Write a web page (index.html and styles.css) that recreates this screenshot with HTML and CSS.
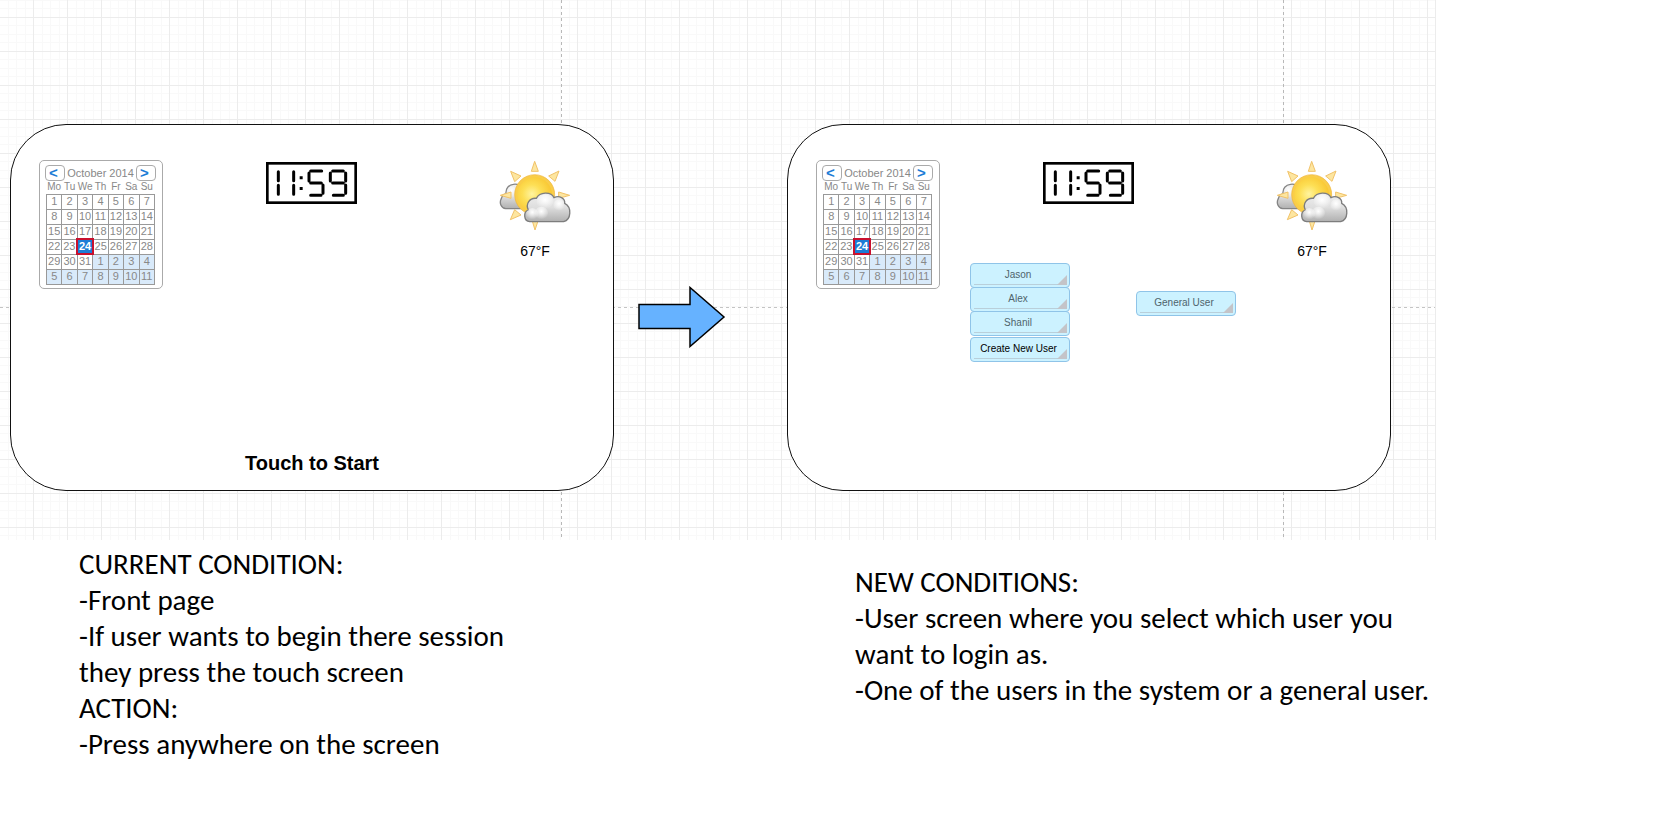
FILE: index.html
```
<!DOCTYPE html>
<html lang="en">
<head>
<meta charset="utf-8">
<title>Storyboard: front page to user screen</title>
<link rel="stylesheet" href="styles.css">
</head>
<body>
<svg class="defs" aria-hidden="true">
  <defs>
    <radialGradient id="sun" cx="42%" cy="48%" r="60%"><stop offset="0" stop-color="#fff4a0"/><stop offset=".45" stop-color="#fddf55"/><stop offset="1" stop-color="#f9c52f"/></radialGradient>
    <linearGradient id="cloud" x1="0" y1="0" x2="0" y2="1"><stop offset="0" stop-color="#f0f0f0"/><stop offset=".5" stop-color="#dedede"/><stop offset="1" stop-color="#b0b0b0"/></linearGradient>
    <radialGradient id="puff" cx="50%" cy="35%" r="60%"><stop offset="0" stop-color="#fff"/><stop offset="1" stop-color="#fff" stop-opacity="0"/></radialGradient>
    <symbol id="weather" viewBox="28 28 216 216">
      <path d="M48 174C34 172 28 156 35 144C37 136 43 131 49 130C47 114 58 102 71 101C83 98 96 106 99 117L116 174Z" fill="url(#cloud)" stroke="#858585" stroke-width="4"/>
      <ellipse cx="66" cy="125" rx="16" ry="18" fill="url(#puff)"/>
      <g fill="#fde6a0" stroke="#f1c268" stroke-width="3" stroke-linejoin="round">
        <path d="M135 32L125 62H146Z"/><path d="M63 62L75 93L94 76Z"/><path d="M208 61L177 76L196 92Z"/><path d="M32 134L64 124V143Z"/><path d="M240 134L207 124V143Z"/><path d="M62 207L75 177L94 193Z"/><path d="M136 238L127 208H146Z"/>
      </g>
      <circle cx="135" cy="132" r="60" fill="#f9cd49" stroke="#eeb43a" stroke-width="2"/>
      <circle cx="135" cy="132" r="52" fill="url(#sun)"/>
      <path d="M120 213C102 211 100 184 116 178C107 160 120 141 140 143C150 123 184 122 193 141C209 133 227 143 225 158C247 169 245 207 222 213Z" fill="url(#cloud)" stroke="#7d7d7d" stroke-width="4"/>
      <ellipse cx="166" cy="154" rx="25" ry="22" fill="url(#puff)"/>
      <ellipse cx="208" cy="164" rx="17" ry="18" fill="url(#puff)"/>
      <circle cx="128" cy="190" r="18" fill="url(#puff)"/>
      <circle cx="155" cy="188" r="20" fill="url(#puff)"/>
    </symbol>
    <symbol id="clock" viewBox="48 35 273 126">
      <rect x="52" y="39" width="265" height="118" fill="#fff" stroke="#000" stroke-width="8"/>
      <g stroke="#000" stroke-width="9" stroke-linecap="round">
        <path d="M85 64V91M85 105V132M131 64V91M131 105V132"/>
        <path d="M182 62H215M177 68V92M182 98H214M219 104V129M182 135H213" fill="none"/>
        <path d="M248 62H280M241 68V92M287 68V92M248 98H280M287 104V129M250 135H280" fill="none"/>
      </g>
      <path d="M149 78h9v9h-9zM149 110h9v9h-9z"/>
    </symbol>
  </defs>
</svg>

<main>
  <section class="canvas">
    <article class="screen">
      <div class="widgets">
        <div class="calendar">
          <div class="cal-head"><button type="button" aria-label="Previous month">&lt;</button><span>October 2014</span><button type="button" aria-label="Next month">&gt;</button></div>
          <table>
            <thead><tr><th>Mo</th><th>Tu</th><th>We</th><th>Th</th><th>Fr</th><th>Sa</th><th>Su</th></tr></thead>
            <tbody>
              <tr><td>1</td><td>2</td><td>3</td><td>4</td><td>5</td><td>6</td><td>7</td></tr>
              <tr><td>8</td><td>9</td><td>10</td><td>11</td><td>12</td><td>13</td><td>14</td></tr>
              <tr><td>15</td><td>16</td><td>17</td><td>18</td><td>19</td><td>20</td><td>21</td></tr>
              <tr><td>22</td><td>23</td><td class="today">24</td><td>25</td><td>26</td><td>27</td><td>28</td></tr>
              <tr><td>29</td><td>30</td><td>31</td><td class="next">1</td><td class="next">2</td><td class="next">3</td><td class="next">4</td></tr>
              <tr><td class="next">5</td><td class="next">6</td><td class="next">7</td><td class="next">8</td><td class="next">9</td><td class="next">10</td><td class="next">11</td></tr>
            </tbody>
          </table>
        </div>
        <div class="center">
          <svg class="clock" role="img" aria-label="11:59"><use href="#clock"/></svg>
        </div>
        <div class="weather"><svg role="img" aria-label="Partly cloudy"><use href="#weather"/></svg><span>67°F</span></div>
      </div>
      <p class="start">Touch to Start</p>
    </article>

    <svg class="arrow" viewBox="0 0 88 62" aria-hidden="true"><path d="M1 18.500H52V1.500L86 31L52 60.500V42.500H1Z" fill="#66b2ff" stroke="#000" stroke-width="1.500"/></svg>

    <article class="screen">
      <div class="widgets">
        <div class="calendar">
          <div class="cal-head"><button type="button" aria-label="Previous month">&lt;</button><span>October 2014</span><button type="button" aria-label="Next month">&gt;</button></div>
          <table>
            <thead><tr><th>Mo</th><th>Tu</th><th>We</th><th>Th</th><th>Fr</th><th>Sa</th><th>Su</th></tr></thead>
            <tbody>
              <tr><td>1</td><td>2</td><td>3</td><td>4</td><td>5</td><td>6</td><td>7</td></tr>
              <tr><td>8</td><td>9</td><td>10</td><td>11</td><td>12</td><td>13</td><td>14</td></tr>
              <tr><td>15</td><td>16</td><td>17</td><td>18</td><td>19</td><td>20</td><td>21</td></tr>
              <tr><td>22</td><td>23</td><td class="today">24</td><td>25</td><td>26</td><td>27</td><td>28</td></tr>
              <tr><td>29</td><td>30</td><td>31</td><td class="next">1</td><td class="next">2</td><td class="next">3</td><td class="next">4</td></tr>
              <tr><td class="next">5</td><td class="next">6</td><td class="next">7</td><td class="next">8</td><td class="next">9</td><td class="next">10</td><td class="next">11</td></tr>
            </tbody>
          </table>
        </div>
        <div class="center">
          <svg class="clock" role="img" aria-label="11:59"><use href="#clock"/></svg>
          <div class="choices">
            <div class="users">
              <button class="user" type="button">Jason</button>
              <button class="user" type="button">Alex</button>
              <button class="user" type="button">Shanil</button>
              <button class="user create" type="button">Create New User</button>
            </div>
            <button class="user" type="button">General User</button>
          </div>
        </div>
        <div class="weather"><svg role="img" aria-label="Partly cloudy"><use href="#weather"/></svg><span>67°F</span></div>
      </div>
    </article>
  </section>

  <section class="notes">
    <p>CURRENT CONDITION:<br>-Front page<br>-If user wants to begin there session<br>they press the touch screen<br>ACTION:<br>-Press anywhere on the screen</p>
    <p class="after">NEW CONDITIONS:<br>-User screen where you select which user you<br>want to login as.<br>-One of the users in the system or a general user.</p>
  </section>
</main>
</body>
</html>
```
FILE: styles.css
```
* { box-sizing: border-box; }
body { margin: 0; background: #fff; color: #000; font-family: "Liberation Sans", Arial, sans-serif; }
p { margin: 0; }
button { font-family: inherit; cursor: pointer; }
.defs { position: absolute; width: 0; height: 0; }
main { margin-right: 236px; }

/* Graph paper with dashed page-break guides */
.canvas {
  display: grid;
  grid-template-columns: 604fr 173fr 604fr;
  padding: 124px 44px 49px 10px;
  border-right: 1px solid #ececec;
  background:
    repeating-linear-gradient(#b8b8b8 0 3px, transparent 3px 6px) 561px 0 / 1px 100% no-repeat,
    repeating-linear-gradient(#b8b8b8 0 3px, transparent 3px 6px) 1283px 0 / 1px 100% no-repeat,
    repeating-linear-gradient(90deg, #c4c4c4 0 3px, transparent 3px 6px) 0 307px / 100% 1px no-repeat,
    linear-gradient(#ececec 1px, transparent 1px) 0 17px / 34px 34px,
    linear-gradient(90deg, #ececec 1px, transparent 1px) 33px 0 / 34px 34px,
    repeating-linear-gradient(#f9f9f9 0 1px, transparent 1px 8px, #f9f9f9 8px 9px, transparent 9px 17px),
    repeating-linear-gradient(90deg, transparent 0 8px, #f9f9f9 8px 9px, transparent 9px 16px, #f9f9f9 16px 17px);
}
.screen {
  display: flex;
  flex-direction: column;
  min-height: 367px;
  padding: 35px 42px 14px 28px;
  border: 1px solid #111;
  border-radius: 56px;
  background: #fff;
}
.widgets { display: grid; grid-template-columns: 124px 1fr 72px; align-items: start; }
.arrow { width: 88px; height: 62px; margin: 162px 0 0 24px; }
.start { margin-top: auto; padding-left: 14px; text-align: center; font-size: 20px; font-weight: bold; line-height: 26px; }

.calendar {
  padding: 4px 7px 3px 6px;
  border: 1px solid #aaa;
  border-radius: 5px;
  color: #888;
  font-size: 11px;
}
.cal-head { display: flex; justify-content: space-between; align-items: center; margin: 0 -1px; height: 16px; white-space: nowrap; }
.cal-head button {
  width: 20px;
  height: 16px;
  padding: 0 3px 0 0;
  border: 1px solid #aaa;
  border-radius: 4px;
  background: #fff;
  color: #1c7cd6;
  font-size: 15px;
  font-weight: bold;
  line-height: 12px;
}
.calendar table { width: 109px; table-layout: fixed; border-collapse: collapse; }
.calendar th { height: 13px; padding: 0; font-size: 10px; font-weight: normal; line-height: 12px; }
.calendar td { height: 15px; padding: 0; border: 1px solid #999; text-align: center; font-size: 11px; line-height: 13px; }
.calendar td.next { background: #d9eafa; }
.calendar td.today { border: 2px solid #c8102e; background: #1c7cd6; color: #fff; font-weight: bold; line-height: 11px; }

.center { padding: 2px 40px 0 30px; }
.clock { display: block; width: 91px; height: 42px; margin-left: 73px; }
.choices { display: flex; justify-content: space-between; align-items: center; margin-top: 59px; }
.choices > .user { margin-bottom: 17px; }
.users { display: flex; flex-direction: column; }
.user {
  position: relative;
  width: 100px;
  height: 25px;
  margin-bottom: -1px;
  padding: 0 4px 2px 0;
  border: 1px solid #8fc4e8;
  border-radius: 4px;
  background: #ccf2ff;
  color: #4f646c;
  font-size: 10px;
  white-space: nowrap;
}
.user::before { content: ""; position: absolute; left: 3px; right: 3px; bottom: 2px; border-bottom: 1px solid #b9cfda; }
.user::after { content: ""; position: absolute; right: 2px; bottom: 2px; border: 5px solid #c4c4c8; border-top-color: transparent; border-left-color: transparent; }
.create { margin-top: 2px; padding-right: 3px; color: #000; }

.weather { display: flex; flex-direction: column; align-items: center; font-size: 14px; line-height: 16px; }
.weather svg { width: 72px; height: 72px; }
.weather span { margin-top: 11px; }

.notes {
  display: grid;
  grid-template-columns: 776fr 581fr;
  padding: 6px 0 0 79px;
  font-family: Calibri, Carlito, Lato, sans-serif;
  font-size: 29px;
  line-height: 36px;
  white-space: nowrap;
}
.after { padding-top: 18px; }
```
